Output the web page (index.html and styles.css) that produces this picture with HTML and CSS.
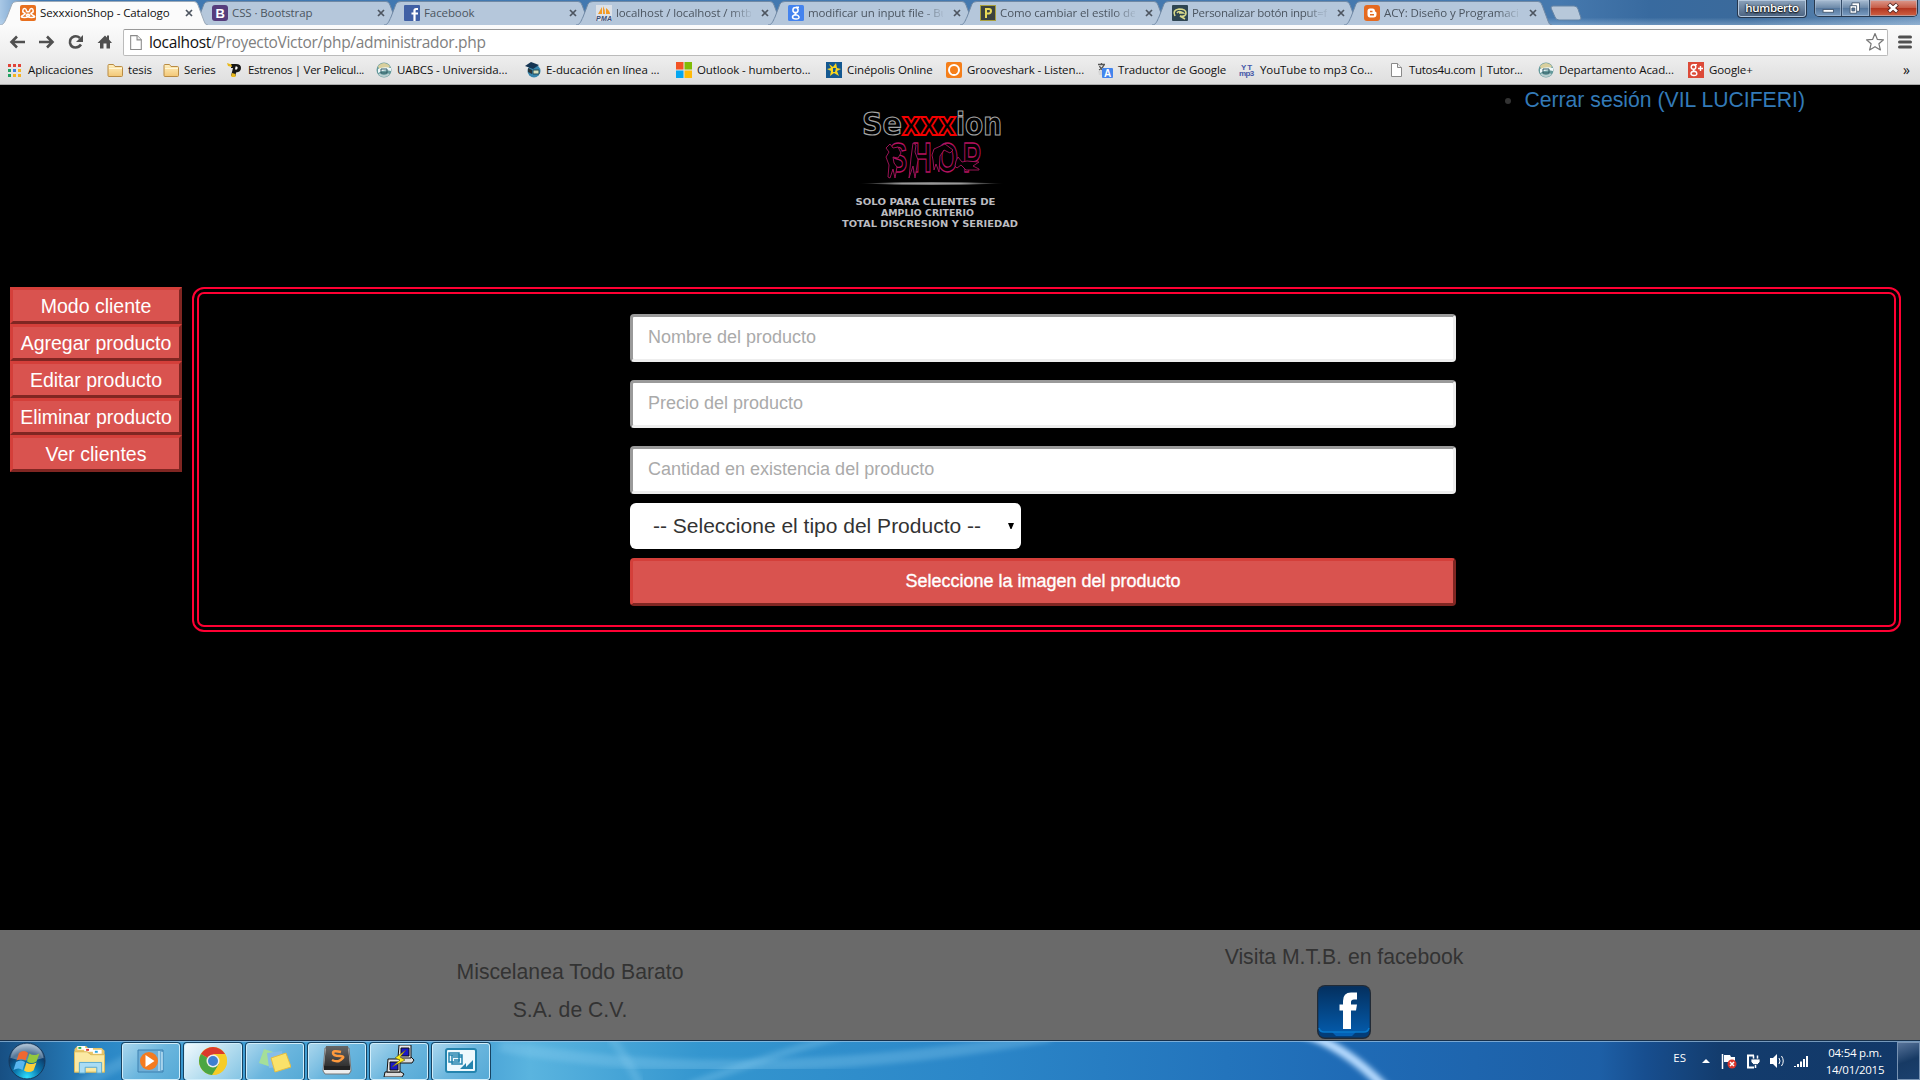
FILE: index.html
```html
<!DOCTYPE html>
<html lang="es">
<head>
<meta charset="utf-8">
<title>SexxxionShop - Catalogo</title>
<link rel="stylesheet" href="styles.css">
</head>
<body>
<svg class="defs" width="0" height="0">
  <defs>
    <linearGradient id="fold" x2="0" y2="1"><stop stop-color="#fff0c0"/><stop offset="1" stop-color="#f3c775"/></linearGradient>
    <linearGradient id="fbg" x2="0" y2="1"><stop stop-color="#04305f"/><stop offset="1" stop-color="#0459a8"/></linearGradient>
    <linearGradient id="fade"><stop stop-color="#999" stop-opacity="0"/><stop offset=".3" stop-color="#999"/><stop offset=".7" stop-color="#999"/><stop offset="1" stop-color="#999" stop-opacity="0"/></linearGradient>
    <radialGradient id="orb" cy=".95" r=".9"><stop stop-color="#2fe0ff"/><stop offset=".4" stop-color="#0b78ae"/><stop offset=".75" stop-color="#0c3c6c"/><stop offset="1" stop-color="#8aa6c0"/></radialGradient>
    <linearGradient id="dark" x2="0" y2="1"><stop stop-color="#666"/><stop offset="1" stop-color="#2c2c2c"/></linearGradient>
    <filter id="soft"><feGaussianBlur stdDeviation="3"/></filter>
    <path id="tabshape" d="M0 24C4 24 5 20 7 16L12 3Q13 .5 17 .5H194Q197 .5 198 4L204 20Q205 24 208 24"/>
    <path id="cross" d="M1 1L7 7M7 1L1 7" stroke="#4d5560" stroke-width="1.700"/>
    <g id="folder"><path d="M1 3.500q0-1 1-1h4.500l1.500 2h6.500q1 0 1 1v8q0 1-1 1h-12.500q-1 0-1-1z" fill="url(#fold)" stroke="#b98b43"/><path d="M2 6.500H15" stroke="#fff6d8"/></g>
    <g id="page"><path d="M2.500 1.500h6l4 4v9h-10z" fill="#fff" stroke="#8a8a8a"/><path d="M8.500 1.500v4h4" fill="#eee" stroke="#8a8a8a"/></g>
    <g id="globe"><circle cx="8" cy="8" r="7.500" fill="#659a9c"/><path d="M2 4Q8-2 14 4L12 7H3z" fill="#d9cf9d"/><path d="M2 7Q8 4 15 6v3Q8 7 2 11z" fill="#eef8fa"/><path d="M5 7h6v4H5z" fill="none" stroke="#315b65"/><path d="M3 12q5 4 10 0" stroke="#b9ced0" fill="none" stroke-width="2"/></g>
  </defs>
</svg>

<header class="browser">
  <div class="titlebar">
    <nav class="tabs">
      <div class="tab active"><svg class="shape" viewBox="0 0 208 24"><use href="#tabshape"/></svg><div class="tabin"><svg viewBox="0 0 16 16"><rect width="16" height="16" rx="2" fill="#e8701f"/><path d="M6.500 6.800H9.500M6.500 9.200H9.500M6.500 6.800V5.500Q6 3.500 4.500 3.500T2.800 5.500 4.500 8 2.800 10.500 4.500 12.500 6.500 10.500V9.200M9.500 6.800V5.500Q10 3.500 11.500 3.500T13.200 5.500 11.500 8 13.200 10.500 11.500 12.500 9.500 10.500V9.200" fill="none" stroke="#fff" stroke-width="1.500"/></svg><span>SexxxionShop - Catalogo</span><svg class="x" viewBox="0 0 8 8"><use href="#cross"/></svg></div></div>
      <div class="tab"><svg class="shape" viewBox="0 0 208 24"><use href="#tabshape"/></svg><div class="tabin"><svg viewBox="0 0 16 16"><rect width="16" height="16" rx="3" fill="#563d7c"/><text x="3.500" y="13" class="fav b13">B</text></svg><span>CSS · Bootstrap</span><svg class="x" viewBox="0 0 8 8"><use href="#cross"/></svg></div></div>
      <div class="tab"><svg class="shape" viewBox="0 0 208 24"><use href="#tabshape"/></svg><div class="tabin"><svg viewBox="0 0 16 16"><rect width="16" height="16" rx="1" fill="#4060a5"/><path d="M14 4h-2q-1.500 0-1.500 1.500V16M7.500 8.500H14" fill="none" stroke="#fff" stroke-width="2.200"/></svg><span>Facebook</span><svg class="x" viewBox="0 0 8 8"><use href="#cross"/></svg></div></div>
      <div class="tab"><svg class="shape" viewBox="0 0 208 24"><use href="#tabshape"/></svg><div class="tabin"><svg viewBox="0 0 16 16"><rect width="16" height="16" fill="#dce1e8"/><path d="M2 9L6 2v7zM7 9V1q2 3 2 8zM10 9V3q4 3 4 6z" fill="#f39a25"/><text x="0" y="15.500" class="pma" textLength="16">PMA</text></svg><span class="cut">localhost / localhost / mtb</span><svg class="x" viewBox="0 0 8 8"><use href="#cross"/></svg></div></div>
      <div class="tab"><svg class="shape" viewBox="0 0 208 24"><use href="#tabshape"/></svg><div class="tabin"><svg viewBox="0 0 16 16"><rect width="16" height="16" rx="1.500" fill="#4483ee"/><g fill="none" stroke="#fff" stroke-width="1.500"><circle cx="7.500" cy="5" r="2.600"/><path d="M8 2.300H11M8.500 7.500Q6 9 8 9.700M8 9.700Q4.500 10 4.500 12T8 14 11 12 8 9.700"/></g></svg><span class="cut">modificar un input file - Bu</span><svg class="x" viewBox="0 0 8 8"><use href="#cross"/></svg></div></div>
      <div class="tab"><svg class="shape" viewBox="0 0 208 24"><use href="#tabshape"/></svg><div class="tabin"><svg viewBox="0 0 16 16"><rect x=".5" y=".5" width="15" height="15" fill="#3b4240" stroke="#a9a03c"/><path d="M6 13V4h3q2 0 2 2t-2 2.500H6" fill="none" stroke="#e8d958" stroke-width="2"/></svg><span class="cut">Como cambiar el estilo del</span><svg class="x" viewBox="0 0 8 8"><use href="#cross"/></svg></div></div>
      <div class="tab"><svg class="shape" viewBox="0 0 208 24"><use href="#tabshape"/></svg><div class="tabin"><svg viewBox="0 0 16 16"><rect width="16" height="16" rx="1" fill="#2e4552"/><path d="M3 11Q0 5 7 4q7 0 7 4t-6 3l5 3M5 8q2-3 6 0H7" fill="none" stroke="#d9d98a" stroke-width="1.600"/></svg><span class="cut tight">Personalizar botón input=f</span><svg class="x" viewBox="0 0 8 8"><use href="#cross"/></svg></div></div>
      <div class="tab"><svg class="shape" viewBox="0 0 208 24"><use href="#tabshape"/></svg><div class="tabin"><svg viewBox="0 0 16 16"><rect width="16" height="16" rx="3" fill="#e56a20"/><path d="M6 3.500h2.500q2.500 0 2.500 3 1.500 0 1.500 1.500v1.500q0 3-3 3h-3.500q-2.500 0-2.500-3v-3.500q0-2.500 2.500-2.500z" fill="#fff"/><path d="M6 6.500h2.500M6 9.800h4" stroke="#e56a20" stroke-width="1.400"/></svg><span class="cut">ACY: Diseño y Programaci</span><svg class="x" viewBox="0 0 8 8"><use href="#cross"/></svg></div></div>
    </nav>
    <svg class="newtab" viewBox="0 0 32 16"><path d="M3 1H24Q27 1 28 4L31 13Q31 15 29 15H9Q6 15 5 12L1 3Q1 1 3 1z" fill="#b7c8da" stroke="#6584a5"/></svg>
    <div class="user">humberto</div>
    <div class="wincontrols">
      <i><svg viewBox="0 0 28 17"><rect x="8.500" y="9.500" width="11" height="3" fill="#fff" stroke="#475b73"/></svg></i><i><svg viewBox="0 0 28 17"><path d="M10.500 2.500h8v9h-8z" fill="#fff" stroke="#475b73"/><path d="M8.500 5.500h7v8h-7z" fill="#fff" stroke="#475b73"/><path d="M10.500 8h3v3h-3z" fill="#56779c" stroke="#475b73"/></svg></i><i class="close"><svg viewBox="0 0 48 17"><path d="M19 4L28 12M28 4L19 12" stroke="#542522" stroke-width="4.500"/><path d="M19.500 4.500L27.500 11.500M27.500 4.500L19.500 11.500" stroke="#fff" stroke-width="2.600"/></svg></i>
    </div>
  </div>
  <div class="toolbar">
    <svg class="nav" viewBox="0 0 112 26"><g fill="none" stroke="#505050" stroke-width="2.600"><path d="M25 13H12M17 7.500L11.500 13L17 18.500"/><path d="M39 13H52M47 7.500L52.500 13L47 18.500"/><path d="M80 9Q77 6.500 74 7.500Q69.500 9 70 14Q71 18.500 75.500 18.500Q79 18.500 81 15.500"/></g><path d="M83 6v7h-7z" fill="#505050"/><path d="M97.500 14L105 6.500L107 8.500V6.500H109V10.500L112 14H110V19.500H106.500V14.500H103.500V19.500H100V14z" fill="#505050"/></svg>
    <div class="omnibox"><svg viewBox="0 0 16 16"><use href="#page"/></svg><p>localhost<span>/ProyectoVictor/php/administrador.php</span></p><svg class="star" viewBox="0 0 20 20"><path d="M10 1.500L12.400 7.400L18.500 7.800L13.900 11.800L15.400 18L10 14.700L4.600 18L6.100 11.800L1.500 7.800L7.600 7.400z" fill="#fff" stroke="#777" stroke-width="1.200" stroke-linejoin="round"/></svg></div>
    <svg class="menu" viewBox="0 0 14 14"><path d="M1.500 2H12.500M1.500 7H12.500M1.500 12H12.500" stroke="#505050" stroke-width="3" stroke-linecap="round"/></svg>
  </div>
  <nav class="bookmarks">
    <a><svg viewBox="0 0 16 16"><path d="M1 2h3v3H1zM6 2h3v3H6zM11 2h3v3h-3z" fill="#e04338"/><path d="M1 7h3v3H1z" fill="#22a162"/><path d="M6 7h3v3H6z" fill="#3e7de0"/><path d="M11 7h3v3h-3zM6 12h3v3H6zM11 12h3v3h-3z" fill="#f5b324"/><path d="M1 12h3v3H1z" fill="#22a162"/></svg>Aplicaciones</a>
    <a><svg viewBox="0 0 16 16"><use href="#folder"/></svg>tesis</a>
    <a><svg viewBox="0 0 16 16"><use href="#folder"/></svg>Series</a>
    <a class="tight"><svg viewBox="0 0 16 16"><path d="M4 2h5q5 0 5 4t-5 4.500L8.500 14H4L6 6H4z" fill="#171717"/><path d="M8.500 4.500h1.500q1.500 1 0 3H8z" fill="#fff"/><path d="M0 1l4.500 1.500L5 5 1 4zM4 14l1-3 3.500 1v3H5z" fill="#e9b91c"/></svg>Estrenos | Ver Pelicul...</a>
    <a><svg viewBox="0 0 16 16"><use href="#globe"/></svg>UABCS - Universida...</a>
    <a><svg viewBox="0 0 16 16"><circle cx="9" cy="9" r="6.500" fill="#3685ad"/><path d="M0 4L6 0L14 3L8 7z" fill="#153553"/><path d="M3 6v4l4 2V8z" fill="#28343a"/><path d="M8 8h6v4H8z" fill="#d6e0bd" stroke="#234a57"/></svg>E-ducación en línea ...</a>
    <a><svg viewBox="0 0 16 16"><path d="M0 0h7.500v7.500H0z" fill="#f35325"/><path d="M8.500 0H16v7.500H8.500z" fill="#81bc06"/><path d="M0 8.500h7.500V16H0z" fill="#05a6f0"/><path d="M8.500 8.500H16V16H8.500z" fill="#ffba08"/></svg>Outlook - humberto...</a>
    <a><svg viewBox="0 0 16 16"><path d="M0 0h16v16H0z" fill="#145891"/><path d="M3 2l4 3 3-4 1 5 4 1-4 2 2 5-5-3-4 3 1-5-4-2 4-1z" fill="#f9d51c"/><path d="M7 6h3l-1 4H7z" fill="#145891"/></svg>Cinépolis Online</a>
    <a><svg viewBox="0 0 16 16"><rect width="16" height="16" rx="2" fill="#f57f1a"/><circle cx="8" cy="8" r="5" fill="none" stroke="#fff" stroke-width="2"/><path d="M6 12V9q2-3 4 0v3z" fill="#f57f1a"/></svg>Grooveshark - Listen...</a>
    <a><svg viewBox="0 0 16 16"><path d="M1 2.500h7M4.500 1v2M2 8q4-2 5-5M2.500 4q1 3 4 5" fill="none" stroke="#555" stroke-width="1.300"/><path d="M1 9h4v4H2z" fill="#d6d6d6"/><rect x="5" y="6" width="11" height="10" rx="1" fill="#4385ed"/><text x="7" y="14.500" class="fav a">A</text></svg>Traductor de Google</a>
    <a><svg viewBox="0 0 16 16"><text x="2" y="7.500" class="yt" textLength="11">YT</text><text x="0" y="14" class="yt" textLength="15">mp3</text></svg>YouTube to mp3 Co...</a>
    <a class="tight pg"><svg viewBox="2 0 16 16"><use href="#page"/></svg>Tutos4u.com | Tutor...</a>
    <a><svg viewBox="0 0 16 16"><use href="#globe"/></svg>Departamento Acad...</a>
    <a><svg viewBox="0 0 16 16"><rect width="16" height="16" fill="#dc4a38"/><g fill="none" stroke="#fff" stroke-width="1.400"><circle cx="5.500" cy="5" r="2.300"/><path d="M6 2.600H9M6.500 7.300Q4.500 8.500 6.200 9.300M6.200 9.300Q3 9.500 3 11.500T6 13.500 8.800 11.500 6.200 9.300M10 6.500h5M12.500 4v5"/></g></svg>Google+</a>
    <b>»</b>
  </nav>
</header>

<main class="site">
  <section class="top">
    <svg class="logo" viewBox="0 0 220 145">
      <g class="brand"><text x="42" y="40" textLength="40" lengthAdjust="spacingAndGlyphs">Se</text><text x="82" y="40" class="hot" textLength="54" lengthAdjust="spacingAndGlyphs">xxx</text><text x="136" y="40" textLength="46" lengthAdjust="spacingAndGlyphs">ion</text></g>
      <text class="shop" transform="translate(69 77) scale(.65 1)">SHOP</text>
      <path d="M66 53l4-4 3 4 5-1 3 6-3 5-5-1 1 6 3 4-2 11-2-9-3 9-2-1 1-12-3-8 3-5zM93 48l3 2-1 7 3 8-3 18-2-12-4 12 2-20zM112 60l2-6 11-5 4 3 4 3-3 3-6-3-4 6-1 16-3-8-2 6-1-10zM136 66l2-4 4 5 5-1 12 1-6 4 6 3v1h-13l-5-5-4 3-2-2z" class="figures"/>
      <path d="M38 88.500Q111 86 185 88.500Q111 91 38 88.500" fill="url(#fade)"/>
      <g class="motto"><text x="35.500" y="110" textLength="140" lengthAdjust="spacingAndGlyphs">SOLO PARA CLIENTES DE</text><text x="61" y="121" textLength="93" lengthAdjust="spacingAndGlyphs">AMPLIO CRITERIO</text><text x="22" y="132" textLength="176" lengthAdjust="spacingAndGlyphs">TOTAL DISCRESION Y SERIEDAD</text></g>
    </svg>
    <ul class="session"><li><a>Cerrar sesión (VIL LUCIFERI)</a></li></ul>
  </section>
  <section class="content">
    <nav class="side"><a>Modo cliente</a><a>Agregar producto</a><a>Editar producto</a><a>Eliminar producto</a><a>Ver clientes</a></nav>
    <form class="panel">
      <input type="text" placeholder="Nombre del producto">
      <input type="text" placeholder="Precio del producto">
      <input type="text" placeholder="Cantidad en existencia del producto">
      <div class="select"><span>-- Seleccione el tipo del Producto --</span><svg viewBox="0 0 6 6"><path d="M0 0h6L3.500 6h-1z"/></svg></div>
      <div class="file">Seleccione la imagen del producto</div>
    </form>
  </section>
  <footer class="foot">
    <div class="company"><p>Miscelanea Todo Barato</p><p>S.A. de C.V.</p></div>
    <div class="social"><p>Visita M.T.B. en facebook</p>
      <svg viewBox="0 0 56 56"><rect x="1" y="1" width="54" height="54" rx="8" fill="#222b36"/><rect x="2.500" y="2.500" width="51" height="51" rx="6" fill="#033d78"/><path d="M20 52H36L40 48H16z" fill="#0560b4"/><path d="M2.500 9q0-6.500 6.500-6.500h38q6.500 0 6.500 6.500v34q0 5-5 5h-41q-5 0-5-5z" fill="url(#fbg)"/><path d="M3 44q1 4 5 4h40q4 0 5-4" fill="none" stroke="#0879cc" stroke-width="1.500"/><path d="M27 45V26.500H23.500V20.500H27V17Q27 8.500 35 8.500H41V15.500H38Q35 15.500 35 18V20.500H41L40 26.500H35V45z" fill="#fff"/></svg>
    </div>
  </footer>
</main>

<div class="taskbar">
  <svg class="glow" viewBox="0 0 1920 40" preserveAspectRatio="none"><g fill="none" stroke="#8fd0f2"><path d="M80 45Q130 15 190-5" stroke-width="12" opacity=".25" filter="url(#soft)"/><path d="M500 5Q740 50 1050-5" stroke-width="12" opacity=".3" filter="url(#soft)"/><path d="M690 45Q770 15 840-5" stroke-width="8" opacity=".3" filter="url(#soft)"/><path d="M610-5Q625 15 640 45" stroke-width="8" opacity=".3" filter="url(#soft)"/></g><path d="M1303-8Q1345 5 1385 48" fill="none" stroke="#b8dcff" stroke-width="9" filter="url(#soft)"/></svg>
  <div class="taskrow">
    <svg class="orb" viewBox="0 0 40 40"><circle cx="20" cy="20" r="18" fill="url(#orb)" stroke="#17385b"/><path d="M3.500 17Q6 4 20 3Q34 4 36.500 17Q20 22 3.500 17" fill="#fff" opacity=".3"/><path d="M12 12q5-4 9 0l-2.500 7.500q-4-3-9 0z" fill="#ef6830"/><path d="M22.500 12.500q4 3 10 0l-3 8q-5 3-9.500 0z" fill="#93c83e"/><path d="M9 21q5-3 9 0l-2.500 8q-4-3-9 0z" fill="#58b6ef"/><path d="M19.500 21.500q4 3 10 0l-3 8q-5 3-9.500 0z" fill="#fccf3c"/></svg>
    <svg class="explorer" viewBox="0 0 34 32"><path d="M1 4l3-3h9l2 2h14l3 3v22H1z" fill="#e8c568"/><path d="M4 1h8v4H4zM11 3h9v4h-9zM20 5h9v4h-9z" fill="#fff"/><path d="M5 2h3v2H5z" fill="#2bb24a"/><path d="M13 4h3v2h-3z" fill="#d33"/><path d="M22 6h3v2h-3z" fill="#28a5df"/><path d="M1 7h13l4 3h14v18H1z" fill="#fbe9a3" stroke="#dcb957"/><path d="M6 18h23v11h-5v-6H12v6H6z" fill="#a9dcf4" stroke="#5aa9cf"/></svg>
    <div class="task"><svg viewBox="0 0 32 32"><path d="M3 5h25v22H3z" fill="#6faed6" stroke="#3c80b0"/><path d="M24 6v20M27 7v18" stroke="#b9e0f4" stroke-width="1.500"/><circle cx="14" cy="16" r="9" fill="#f47b20"/><path d="M10.500 10v12l9-6z" fill="#fff"/></svg></div>
    <div class="task on"><svg viewBox="0 0 32 32"><circle cx="16" cy="16" r="14" fill="#f6cc27"/><path d="M16 16L3.900 9A14 14 0 0 1 28.100 9z" fill="#db3a2c"/><path d="M16 16L3.900 9A14 14 0 0 0 15 30L22 19z" fill="#4ba643"/><path d="M16 9H28.100A14 14 0 0 1 16 30L22 19z" fill="#f6cc27"/><circle cx="16" cy="16" r="6.500" fill="#eee"/><circle cx="16" cy="16" r="5" fill="#3f7fd0"/></svg></div>
    <div class="task"><svg viewBox="0 0 32 32"><path d="M5 4l12 4-5 14-12-4z" fill="#a5df99"/><path d="M8 8l15-2 2 15-15 2z" fill="#87bde9"/><path d="M12 13l15-5 5 14-16 5z" fill="#fae26a" stroke="#e2bd44"/></svg></div>
    <div class="task"><svg viewBox="0 0 32 32"><path d="M4 3h24l2 23-2 3H4l-2-3z" fill="#eee" stroke="#777"/><path d="M5 1h22l2 20-2 2H5l-2-2z" fill="url(#dark)"/><path d="M3 21h26v4H3z" fill="#222"/><path d="M20 7q-8-2-8 1t7 3-1 5q-3 1-7-1" fill="none" stroke="#ff9a3d" stroke-width="2.500"/></svg></div>
    <div class="task"><svg viewBox="0 0 32 32"><g stroke="#111"><path d="M15 12h13l3 3-2 3H14z" fill="#ddd"/><path d="M16 0h12v13H15z" fill="#e8e8e8"/><path d="M18 3h8v8h-8z" fill="#1919c8"/><path d="M2 27h16l3 2-2 3H1z" fill="#ddd"/><path d="M5 14h12v13H4z" fill="#e8e8e8"/><path d="M7 17h8v8H7z" fill="#1919c8"/></g><path d="M23 5L12 13l5 2-8 7 13-7-5-3z" fill="#ffee19" stroke="#5a5413" stroke-width=".6"/></svg></div>
    <div class="task"><svg viewBox="0 0 32 32"><rect x="1" y="4" width="30" height="23" rx="2" fill="#eef9fd" stroke="#2484ae" stroke-width="2"/><path d="M4 8h10v9H4zM7 10h10v9H7zM4 10h9M8 12h9M9 15h6" fill="none" stroke="#2484ae" stroke-width="1.500"/><path d="M15 24l6-6v6zM19 24l9-9v9z" fill="#2484ae"/></svg></div>
    <div class="tray">
      <span class="lang">ES</span>
      <svg class="icons" viewBox="0 0 110 24"><path d="M0 14h8l-4-4z" fill="#fff"/><path d="M20.500 5v15" stroke="#fff" stroke-width="1.500"/><path d="M22 6h6l1 2h4v7h-5l-1-2h-5z" fill="#fff"/><circle cx="30" cy="15" r="4.500" fill="#db352b"/><path d="M28 13l4 4m0-4l-4 4" stroke="#fff" stroke-width="1.500"/><path d="M52 6.500h-6v12h6" fill="none" stroke="#fff" stroke-width="2"/><path d="M51.500 6.500v4m4-4v4M53.500 15v4" stroke="#fff" stroke-width="1.500"/><path d="M49 10h9v3l-2.500 2.500h-4L49 13z" fill="#fff" stroke="#173a64" stroke-width=".8"/><path d="M68 9h3l4-4v14l-4-4h-3z" fill="#fff"/><path d="M77 9q2 3 0 6M79.500 7q3.500 5 0 10" fill="none" stroke="#fff"/><path d="M92 17h2v1h-2zM95 15h2v3h-2zM98 12.500h2v5.500h-2zM101 10h2v8h-2zM104 7h2v11h-2z" fill="#fff"/></svg>
      <div class="clock">04:54 p.m.<br>14/01/2015</div>
      <i class="desk"></i>
    </div>
  </div>
</div>
</body>
</html>
```
FILE: styles.css
```css
* { box-sizing: border-box; }
body { margin: 0; width: 1920px; height: 1080px; overflow: hidden; background: #000; display: flex; flex-direction: column; font-family: "Liberation Sans", Arial, sans-serif; }
p, ul { margin: 0; padding: 0; }
i, b { font-style: normal; font-weight: normal; }
.defs { position: absolute; }

/* Browser window */
.browser { height: 85px; flex: none; background: #e4e4e4; border-bottom: 1px solid #aaa; font-family: "Open Sans", "Noto Sans", sans-serif; font-size: 12px; color: #111; }
.titlebar { height: 25px; display: flex; align-items: flex-start; background: linear-gradient(#0000 70%, #cfe4f655), linear-gradient(90deg, #a9c8e6 0, #3f78b2 40px, #4679ae 1560px, #386a9f 1650px, #3b6a9b 1750px, #7197bf 1920px); }
.tabs { display: flex; padding-top: 1px; }
.tab { width: 208px; height: 24px; margin-right: -16px; display: grid; grid-template-columns: 208px; position: relative; color: #4b5560; }
.tab.active { z-index: 1; color: #111; }
.shape { grid-area: 1 / 1; width: 208px; height: 24px; fill: #b5c7db; stroke: #7089a5; }
.active .shape { fill: #fbfbfb; stroke: #9ba9b8; }
.tabin { grid-area: 1 / 1; position: relative; display: flex; align-items: center; padding-left: 20px; height: 24px; }
.tabin svg { width: 16px; height: 16px; flex: none; }
.tabin span { width: 135px; margin: -1px 10px 0 4px; overflow: hidden; white-space: nowrap; font-size: 11.500px; letter-spacing: -.1px; }
.tabin .cut { -webkit-mask-image: linear-gradient(90deg, #000 84%, transparent 102%); mask-image: linear-gradient(90deg, #000 84%, transparent 102%); }
.tabin .tight, .bookmarks .tight { letter-spacing: -.3px; }
.tabin .x { width: 8px; height: 8px; }
.newtab { width: 32px; height: 16px; margin: 5px 0 0 14px; }
.user { margin-left: auto; width: 70px; height: 18px; border: 1px solid #25364c; border-top: 0; border-radius: 0 0 4px 4px; background: linear-gradient(#8ca3bc, #49617f); box-shadow: inset 0 0 0 1px #b4c7dc; color: #fff; font-size: 11.500px; line-height: 16px; text-align: center; text-shadow: 0 0 2px #000, 0 1px 2px #000; font-weight: 600; letter-spacing: -.3px; }
.wincontrols { display: flex; width: 104px; height: 17px; margin: 0 2px 0 7px; border: 1px solid #28394e; border-top: 0; border-radius: 0 0 5px 5px; overflow: hidden; background: linear-gradient(#a9bdd3, #6b88a8 50%, #55779d 51%, #7b9dc2); }
.wincontrols i { width: 28px; border-right: 1px solid #344b67; box-shadow: inset 0 0 0 1px #b4c7dc88; }
.wincontrols .close { width: 48px; border: 0; background: linear-gradient(#dd9b8e, #c65a45 50%, #b23520 51%, #cf6143); }
.wincontrols svg { display: block; height: 17px; width: 100%; }
.toolbar { height: 33px; display: flex; align-items: center; background: linear-gradient(#fbfbfb, #ededed); }
.nav { width: 112px; height: 26px; margin-right: 11px; }
.omnibox { width: 1765px; height: 27px; margin-top: 1px; display: flex; align-items: center; background: #fff; border: 1px solid #bbb; border-top-color: #999; border-radius: 2px; padding-left: 4px; }
.omnibox svg { width: 17px; height: 17px; }
.omnibox p { margin-left: 4px; font-size: 15.500px; line-height: 20px; letter-spacing: -.32px; }
.omnibox span { color: #808080; }
.omnibox .star { width: 20px; height: 20px; margin: 0 2px 0 auto; }
.menu { width: 14px; height: 14px; margin-left: 10px; }
.bookmarks { height: 26px; padding: 0 10px 3px 7px; display: grid; align-items: center; background: linear-gradient(#ededed, #dedede); grid-template-columns: 100px 56px 64px 149px 149px 151px 150px 120px 151px 142px 152px 147px 150px 1fr auto; }
.bookmarks a { display: flex; align-items: center; white-space: nowrap; font-size: 11.500px; letter-spacing: -.1px; line-height: 16px; }
.bookmarks svg { width: 16px; height: 16px; margin-right: 5px; flex: none; }
.bookmarks .pg svg { margin-right: 2px; }
.bookmarks b { font-size: 14px; }
.fav { fill: #fff; font-family: "Liberation Sans", Arial, sans-serif; font-weight: bold; }
.b13 { font-size: 13px; }
.a { font-size: 10px; }
.pma { font: italic bold 7px "Liberation Sans", sans-serif; fill: #374e78; }
.yt { font: bold 8px "Liberation Sans", sans-serif; fill: #4658a8; }

/* Shop page */
.site { height: 955px; flex: none; display: flex; flex-direction: column; font-size: 21.200px; }
.top { height: 202px; flex: none; display: flex; align-items: flex-start; padding: 10px 115px 0 820px; }
.logo { width: 220px; height: 145px; }
.brand { font: bold 32px "DejaVu Sans", sans-serif; fill: #000; stroke: #a5a5a5; stroke-width: 1.200px; }
.hot { stroke: #f40000; stroke-width: 1.900px; }
.shop { font: bold 42px "Liberation Sans", sans-serif; letter-spacing: 7.500px; fill: #000; stroke: #b3125f; stroke-width: 1.400px; }
.figures { fill: #000; stroke: #a8145c; stroke-width: .9px; }
.motto { font: bold 9.500px "DejaVu Sans", sans-serif; fill: #bcbcc0; }
.session { margin-left: auto; line-height: 28px; margin-top: -9px; color: #333; }
.session a { color: #337ab7; }
.content { display: flex; padding-left: 10px; gap: 10px; align-items: flex-start; height: 643px; }
.side { width: 172px; display: flex; flex-direction: column; }
.side a { height: 37px; border: 3px solid; border-color: #d43f3a #802622 #802622 #d43f3a; background: #d9534f; color: #fff; font-size: 19.500px; text-align: center; line-height: 32px; white-space: nowrap; }
.panel { width: 1709px; height: 345px; border: 7px double #ff0033; border-radius: 12px; padding: 20px 438px 0 431px; display: flex; flex-direction: column; align-items: stretch; }
.panel input { height: 48px; width: 100%; flex: none; margin: 0 0 18px; padding: 0 15px 1px; border: 3px solid; border-color: #9a9a9a #eee #eee #9a9a9a; border-radius: 4px; background: #fff; font: 18px "Liberation Sans", Arial, sans-serif; }
.panel input:nth-child(3) { margin-bottom: 9px; }
.panel input::placeholder { color: #aaa; opacity: 1; }
.select { width: 391px; height: 46px; flex: none; margin-bottom: 9px; border-radius: 6px; background: #fff; color: #333; font-size: 21px; display: flex; align-items: center; justify-content: space-between; padding: 0 7px 0 23px; white-space: nowrap; }
.select svg { width: 6px; height: 6px; }
.file { height: 48px; flex: none; border: 3px solid; border-color: #d43f3a #802622 #802622 #d43f3a; border-radius: 4px; background: #d9534f; color: #fff; font-size: 18px; line-height: 40px; text-align: center; -webkit-text-stroke: .35px #fff; }
.foot { height: 110px; background: #6a6a6a; color: #333; display: flex; padding-left: 183px; }
.company, .social { width: 774px; display: flex; flex-direction: column; align-items: center; }
.company { padding-top: 23px; }
.company p { line-height: 38px; }
.social { padding-top: 13px; }
.social p { line-height: 28px; }
.social svg { width: 56px; height: 56px; margin-top: 13px; flex: none; }

/* Windows taskbar */
.taskbar { height: 40px; flex: none; display: grid; border-top: 1px solid #17304b; background: linear-gradient(90deg, #174f83 0, #2a86c5 100px, #3c9bd2 200px, #4aa3d6 480px, #5ab4df 530px, #3496cf 700px, #2b86c8 980px, #1f6bb6 1350px, #1d5fa6 1600px, #174e8f 1645px, #133c6d 1720px, #123868 1920px); box-shadow: inset 0 1px #a6c9e6aa; }
.glow, .taskrow { grid-area: 1 / 1; width: 1920px; height: 39px; overflow: hidden; }
.taskrow { position: relative; display: flex; align-items: center; }
.orb { width: 40px; height: 40px; margin: 0 26px 0 7px; flex: none; }
.explorer { width: 34px; height: 31px; margin-right: 15px; flex: none; }
.task { width: 58px; height: 37px; margin-right: 4px; margin-top: 1px; flex: none; border: 1px solid #d1eefb; border-radius: 3px; box-shadow: 0 0 0 1px #174362; background: linear-gradient(135deg, #a9d6ed, #6bb6de 50%, #56aad6); display: grid; place-items: center; }
.task.on { background: linear-gradient(135deg, #f0f9fd, #b9dff0 50%, #85c5e4); }
.task svg { width: 32px; height: 32px; }
.tray { margin-left: auto; display: flex; align-items: center; color: #fff; font-family: "Open Sans", "Noto Sans", sans-serif; font-size: 12px; height: 39px; }
.lang { margin: -6px 16px 0 0; font-size: 11.500px; }
.icons { width: 110px; height: 24px; }
.clock { width: 80px; text-align: center; line-height: 17px; font-size: 11.500px; letter-spacing: -.25px; margin: 1px 2px 0 3px; }
.desk { width: 23px; height: 38px; border: 1px solid #7893b3; background: linear-gradient(160deg, #577399, #173a64 50%, #1b406e); }
```
